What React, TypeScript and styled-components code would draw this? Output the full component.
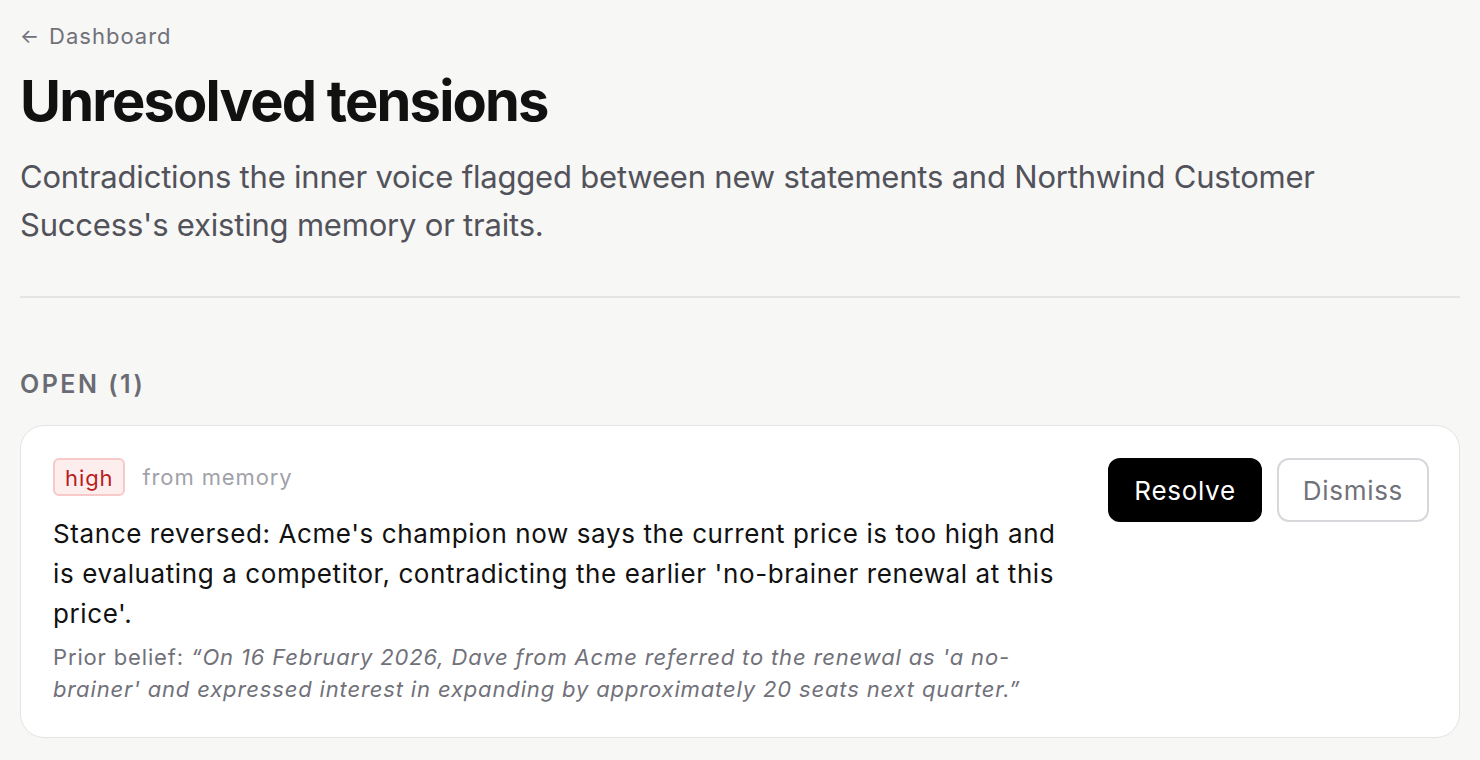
import * as React from "react";
import styled, { createGlobalStyle } from "styled-components";

const GlobalStyle = createGlobalStyle`
  html, body {
    margin: 0;
    padding: 0;
    background: #f7f7f5;
    font-family: Inter, "Liberation Sans", sans-serif;
    color: #111111;
  }
`;

const tension = {
  severity: "high",
  source: "from memory",
  summary:
    "Stance reversed: Acme's champion now says the current price is too high and is evaluating a competitor, contradicting the earlier 'no-brainer renewal at this price'.",
  prior:
    "On 16 February 2026, Dave from Acme referred to the renewal as 'a no-brainer' and expressed interest in expanding by approximately 20 seats next quarter.",
};

export default function App() {
  return (
    <>
      <GlobalStyle />
      <Page>
        <BackLink href="#">
          <Arrow>←</Arrow>
          Dashboard
        </BackLink>
        <Title>Unresolved tensions</Title>
        <Intro>
          Contradictions the inner voice flagged between new statements and
          Northwind Customer Success's existing memory or traits.
        </Intro>
        <Divider />
        <SectionLabel>Open (1)</SectionLabel>
        <Card>
          <CardBody>
            <Meta>
              <Badge>{tension.severity}</Badge>
              <Source>{tension.source}</Source>
            </Meta>
            <Summary>{tension.summary}</Summary>
            <Prior>
              Prior belief: <Quote>“{tension.prior}”</Quote>
            </Prior>
          </CardBody>
          <Actions>
            <Button $primary>Resolve</Button>
            <Button>Dismiss</Button>
          </Actions>
        </Card>
      </Page>
    </>
  );
}

const Page = styled.div`
  padding: 20px 20px 40px;
`;

const BackLink = styled.a`
  display: inline-flex;
  align-items: center;
  gap: 10px;
  font-size: 22px;
  line-height: 32px;
  letter-spacing: 1px;
  color: #71717a;
  text-decoration: none;
`;

const Arrow = styled.span`
  font-size: 20px;
  letter-spacing: 0;
`;

const Title = styled.h1`
  margin: 18px 0 0;
  font-size: 56px;
  line-height: 62px;
  font-weight: 700;
  letter-spacing: -1.8px;
  color: #111111;
`;

const Intro = styled.p`
  margin: 21px 0 0;
  font-size: 31px;
  line-height: 48px;
  letter-spacing: -0.2px;
  color: #52525b;
`;

const Divider = styled.hr`
  margin: 47px 0 0;
  border: none;
  border-top: 2px solid #e4e4e4;
`;

const SectionLabel = styled.h2`
  margin: 70px 0 0;
  font-size: 25px;
  line-height: 32px;
  font-weight: 600;
  letter-spacing: 2.5px;
  text-transform: uppercase;
  color: #6b6b73;
`;

const Card = styled.div`
  margin-top: 25px;
  display: flex;
  gap: 48px;
  align-items: flex-start;
  padding: 32px 30px 32px 32px;
  background: #ffffff;
  border: 1px solid #e4e4e2;
  border-radius: 24px;
`;

const CardBody = styled.div`
  flex: 1;
  min-width: 0;
`;

const Meta = styled.div`
  display: flex;
  align-items: center;
  gap: 17px;
`;

const Badge = styled.span`
  display: inline-block;
  padding: 0 10px;
  height: 38px;
  line-height: 36px;
  box-sizing: border-box;
  font-size: 22px;
  letter-spacing: 0.9px;
  color: #b91c1c;
  background: #fdeeee;
  border: 2px solid #f7c9c9;
  border-radius: 6px;
`;

const Source = styled.span`
  font-size: 22px;
  letter-spacing: 0.9px;
  color: #a1a1aa;
`;

const Summary = styled.p`
  margin: 18px 0 0;
  font-size: 26px;
  line-height: 40px;
  letter-spacing: 0.6px;
  color: #111111;
`;

const Prior = styled.p`
  margin: 7px 0 0;
  font-size: 22px;
  line-height: 32px;
  letter-spacing: 0.85px;
  color: #71717a;
`;

const Quote = styled.em`
  font-style: italic;
`;

const Actions = styled.div`
  display: flex;
  gap: 15px;
  flex-shrink: 0;
`;

const Button = styled.button<{ $primary?: boolean }>`
  height: 64px;
  padding: 0 24px;
  font-family: inherit;
  font-size: 26px;
  letter-spacing: 0.7px;
  border-radius: 12px;
  cursor: pointer;
  background: ${(p) => (p.$primary ? "#000000" : "#ffffff")};
  color: ${(p) => (p.$primary ? "#ffffff" : "#71717a")};
  border: 2px solid ${(p) => (p.$primary ? "#000000" : "#d8d8dc")};
`;
